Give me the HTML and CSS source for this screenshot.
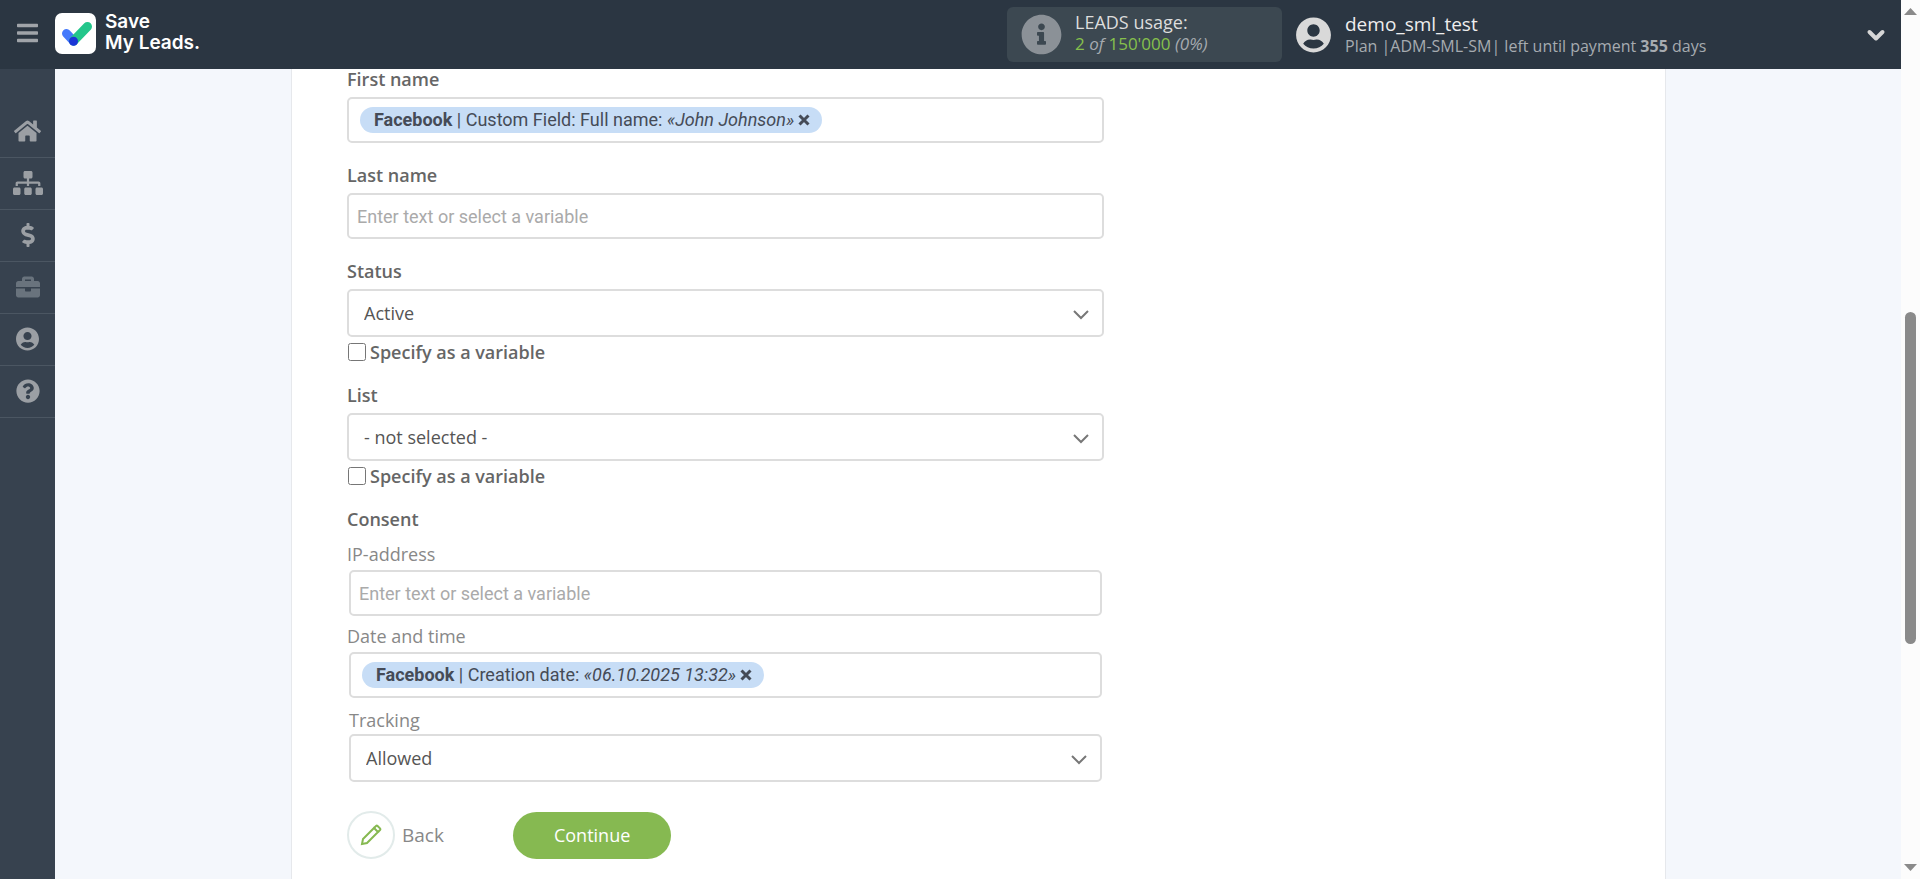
FILE: index.html
```html
<!DOCTYPE html>
<html lang="en">
<head>
<meta charset="utf-8">
<title>Save My Leads</title>
<link rel="stylesheet" href="styles.css">
</head>
<body>
<div class="app">
  <header class="topbar">
    <button class="menu-btn" type="button" aria-label="Menu">
      <svg width="21" height="24" viewBox="0 0 448 512"><path d="M16 132h416c9 0 16-7 16-16V76c0-9-7-16-16-16H16C7 60 0 67 0 76v40c0 9 7 16 16 16zm0 160h416c9 0 16-7 16-16v-40c0-9-7-16-16-16H16c-9 0-16 7-16 16v40c0 9 7 16 16 16zm0 160h416c9 0 16-7 16-16v-40c0-9-7-16-16-16H16c-9 0-16 7-16 16v40c0 9 7 16 16 16z"/></svg>
    </button>
    <a class="brand" href="#">
      <svg width="41" height="41" viewBox="0 0 41 41" fill="none" stroke-width="9" stroke-linecap="round">
        <rect width="41" height="41" rx="7" fill="#fff"/>
        <path d="M11.5 20.5l7 7.5" stroke="#4479fb"/>
        <path d="M18.5 28l14-14.500" stroke="#23c68b"/>
        <circle cx="18.500" cy="28.300" r="4.500" fill="#1b35d6"/>
      </svg>
      <span class="brand-name">Save<br>My Leads.</span>
    </a>
    <div class="usage">
      <svg class="usage-icon" width="41" height="41" viewBox="0 0 512 512"><path d="M256 8C119.043 8 8 119.083 8 256c0 136.997 111.043 248 248 248s248-111.003 248-248C504 119.083 392.957 8 256 8zm0 110c23.196 0 42 18.804 42 42s-18.804 42-42 42-42-18.804-42-42 18.804-42 42-42zm56 254c0 6.627-5.373 12-12 12h-88c-6.627 0-12-5.373-12-12v-24c0-6.627 5.373-12 12-12h12v-64h-12c-6.627 0-12-5.373-12-12v-24c0-6.627 5.373-12 12-12h64c6.627 0 12 5.373 12 12v100h12c6.627 0 12 5.373 12 12v24z"/></svg>
      <div class="usage-text">
        <div class="usage-title">LEADS usage:</div>
        <div class="usage-count"><b>2</b> <i>of</i> <b>150'000</b> <i>(0%)</i></div>
      </div>
    </div>
    <div class="user">
      <svg class="user-icon" width="35" height="36" viewBox="0 0 496 512"><path d="M248 8C111 8 0 119 0 256s111 248 248 248 248-111 248-248S385 8 248 8zm0 96c48.6 0 88 39.4 88 88s-39.4 88-88 88-88-39.4-88-88 39.4-88 88-88zm0 344c-58.7 0-111.3-26.6-146.5-68.2 18.8-35.4 55.6-59.8 98.5-59.8 2.4 0 4.8.4 7.1 1.1 13 4.2 26.6 6.9 40.9 6.9 14.3 0 28-2.7 40.9-6.9 2.3-.7 4.7-1.1 7.1-1.1 42.9 0 79.7 24.4 98.5 59.8C359.3 421.4 306.7 448 248 448z"/></svg>
      <div class="user-text">
        <div class="user-name">demo_sml_test</div>
        <div class="user-plan">Plan |ADM-SML-SM| left until payment <b>355</b> days</div>
      </div>
      <button class="user-toggle" type="button" aria-label="Account menu">
        <svg width="20" height="14" viewBox="0 0 20 14" fill="none" stroke="#d6d6d6" stroke-width="4" stroke-linecap="round" stroke-linejoin="round"><path d="M3.500 4L10 10.500 16.500 4"/></svg>
      </button>
    </div>
  </header>

  <nav class="sidebar" aria-label="Main">
    <a class="nav-item" href="#" aria-label="Home"><svg width="27" height="24" viewBox="0 0 576 512"><path d="M280.37 148.26L96 300.11V464a16 16 0 0 0 16 16l112.06-.29a16 16 0 0 0 15.92-16V368a16 16 0 0 1 16-16h64a16 16 0 0 1 16 16v95.64a16 16 0 0 0 16 16.05L464 480a16 16 0 0 0 16-16V300L295.67 148.26a12.19 12.19 0 0 0-15.3 0zM571.6 251.47L488 182.56V44.05a12 12 0 0 0-12-12h-56a12 12 0 0 0-12 12v72.61L318.47 43a48 48 0 0 0-61 0L4.34 251.47a12 12 0 0 0-1.6 16.9l25.5 31A12 12 0 0 0 45.15 301l235.22-193.74a12.19 12.19 0 0 1 15.3 0L530.9 301a12 12 0 0 0 16.9-1.6l25.5-31a12 12 0 0 0-1.7-16.93z"/></svg></a>
    <a class="nav-item" href="#" aria-label="Connections"><svg width="30" height="24" viewBox="0 0 640 512"><path d="M128 352H32c-17.67 0-32 14.33-32 32v96c0 17.67 14.33 32 32 32h96c17.67 0 32-14.33 32-32v-96c0-17.67-14.33-32-32-32zm-24-80h192v48h48v-48h192v48h48v-57.59c0-21.17-17.23-38.41-38.41-38.41H344v-64h40c17.67 0 32-14.33 32-32V32c0-17.67-14.33-32-32-32H256c-17.67 0-32 14.33-32 32v96c0 17.67 14.33 32 32 32h40v64H94.41C73.23 224 56 241.23 56 262.41V320h48v-48zm264 80h-96c-17.67 0-32 14.33-32 32v96c0 17.67 14.33 32 32 32h96c17.67 0 32-14.33 32-32v-96c0-17.67-14.33-32-32-32zm240 0h-96c-17.67 0-32 14.33-32 32v96c0 17.67 14.33 32 32 32h96c17.67 0 32-14.33 32-32v-96c0-17.67-14.33-32-32-32z"/></svg></a>
    <a class="nav-item" href="#" aria-label="Billing"><svg width="14" height="24" viewBox="0 0 288 512"><path d="M209.2 233.4l-108-31.6C88.7 198.2 80 186.5 80 173.5c0-16.3 13.2-29.5 29.5-29.5h66.3c12.2 0 24.2 3.7 34.2 10.5 6.1 4.1 14.3 3.1 19.5-2l34.8-34c7.1-6.9 6.1-18.4-1.8-24.500C238 74.8 207.4 64.1 176 64V16c0-8.8-7.2-16-16-16h-32c-8.8 0-16 7.2-16 16v48h-2.5C45.8 64-5.4 118.7.5 183.6c4.2 46.1 39.4 83.6 83.8 96.6l102.500 30c12.5 3.7 21.2 15.3 21.2 28.3 0 16.3-13.2 29.5-29.5 29.5h-66.3C100 368 88 364.3 78 357.5c-6.1-4.1-14.3-3.1-19.5 2l-34.8 34c-7.1 6.9-6.1 18.4 1.8 24.5 24.5 19.2 55.1 29.9 86.5 30v48c0 8.8 7.2 16 16 16h32c8.8 0 16-7.2 16-16v-48.2c46.6-.9 90.3-28.6 105.7-72.7 21.5-61.6-14.6-124.8-72.5-141.700z"/></svg></a>
    <a class="nav-item nav-item-dim" href="#" aria-label="Projects"><svg width="24" height="24" viewBox="0 0 512 512"><path d="M320 336c0 8.84-7.16 16-16 16h-96c-8.84 0-16-7.16-16-16v-48H0v144c0 25.6 22.4 48 48 48h416c25.6 0 48-22.4 48-48V288H320v48zm144-208h-80V80c0-25.6-22.4-48-48-48H176c-25.6 0-48 22.4-48 48v48H48c-25.6 0-48 22.4-48 48v80h512v-80c0-25.6-22.4-48-48-48zm-144 0H192V96h128v32z"/></svg></a>
    <a class="nav-item" href="#" aria-label="Profile"><svg width="23" height="24" viewBox="0 0 496 512"><path d="M248 8C111 8 0 119 0 256s111 248 248 248 248-111 248-248S385 8 248 8zm0 96c48.6 0 88 39.4 88 88s-39.4 88-88 88-88-39.4-88-88 39.4-88 88-88zm0 344c-58.7 0-111.3-26.6-146.5-68.2 18.8-35.4 55.6-59.8 98.5-59.8 2.4 0 4.8.4 7.1 1.1 13 4.2 26.6 6.9 40.9 6.9 14.3 0 28-2.7 40.9-6.9 2.3-.7 4.7-1.1 7.1-1.1 42.9 0 79.7 24.4 98.5 59.8C359.3 421.4 306.7 448 248 448z"/></svg></a>
    <a class="nav-item" href="#" aria-label="Help"><svg width="24" height="24" viewBox="0 0 512 512"><path d="M504 256c0 136.997-111.043 248-248 248S8 392.997 8 256C8 119.083 119.043 8 256 8s248 111.083 248 248zM262.655 90c-54.497 0-89.255 22.957-116.549 63.758-3.536 5.286-2.353 12.415 2.715 16.258l34.699 26.31c5.205 3.947 12.621 3.008 16.665-2.122 17.864-22.658 30.113-35.797 57.303-35.797 20.429 0 45.698 13.148 45.698 32.958 0 14.976-12.363 22.667-32.534 33.976C247.128 238.528 216 254.941 216 296v4c0 6.627 5.373 12 12 12h56c6.627 0 12-5.373 12-12v-1.333c0-28.462 83.186-29.647 83.186-106.667 0-58.002-60.165-102-116.531-102zM256 338c-25.365 0-46 20.635-46 46 0 25.364 20.635 46 46 46s46-20.636 46-46c0-25.365-20.635-46-46-46z"/></svg></a>
  </nav>

  <main class="content">
    <form class="panel">
      <div class="form">
        <div class="field">
          <label class="label" for="first-name">First name</label>
          <div class="box box-tags">
            <span class="tag"><b>Facebook</b> | Custom Field: Full name: <i>«John Johnson»</i><button class="tag-x" type="button" aria-label="Remove"><svg width="12" height="12" viewBox="0 0 12 12" fill="none" stroke="#454b57" stroke-width="3"><path d="M1.500 1.500l9 9M10.500 1.500l-9 9"/></svg></button></span>
            <input class="tag-input" id="first-name" type="text">
          </div>
        </div>
        <div class="field">
          <label class="label" for="last-name">Last name</label>
          <input class="box box-text" id="last-name" type="text" placeholder="Enter text or select a variable">
        </div>
        <div class="field">
          <label class="label" for="status">Status</label>
          <div class="select">
            <select class="box box-select" id="status"><option>Active</option></select>
            <svg class="select-arrow" width="16" height="10" viewBox="0 0 16 10"><path d="M1 1l7 7 7-7"/></svg>
          </div>
          <label class="check"><input type="checkbox">Specify as a variable</label>
        </div>
        <div class="field">
          <label class="label" for="list">List</label>
          <div class="select">
            <select class="box box-select" id="list"><option>- not selected -</option></select>
            <svg class="select-arrow" width="16" height="10" viewBox="0 0 16 10"><path d="M1 1l7 7 7-7"/></svg>
          </div>
          <label class="check"><input type="checkbox">Specify as a variable</label>
        </div>
        <fieldset class="group">
          <legend class="label">Consent</legend>
          <label class="sublabel" for="ip">IP-address</label>
          <div class="inset"><input class="box box-text" id="ip" type="text" placeholder="Enter text or select a variable"></div>
          <label class="sublabel" for="date">Date and time</label>
          <div class="inset">
            <div class="box box-tags">
              <span class="tag"><b>Facebook</b> | Creation date: <i>«06.10.2025 13:32»</i><button class="tag-x" type="button" aria-label="Remove"><svg width="12" height="12" viewBox="0 0 12 12" fill="none" stroke="#454b57" stroke-width="3"><path d="M1.500 1.500l9 9M10.500 1.500l-9 9"/></svg></button></span>
              <input class="tag-input" id="date" type="text">
            </div>
          </div>
          <div class="inset tracking">
            <label class="sublabel" for="tracking">Tracking</label>
            <div class="select">
              <select class="box box-select" id="tracking"><option>Allowed</option></select>
              <svg class="select-arrow" width="16" height="10" viewBox="0 0 16 10"><path d="M1 1l7 7 7-7"/></svg>
            </div>
          </div>
        </fieldset>
        <div class="actions">
          <button class="back" type="button">
            <span class="back-icon"><svg width="22" height="22" viewBox="0 0 22 22" fill="none" stroke="#86b951" stroke-width="2"><path d="M2 20l1-5L14 4l4 4L7 19z"/><path d="M14 4l2-2q.8-.7 1.600 0l2.400 2.400q.7.800 0 1.600l-2 2"/></svg></span>
            Back
          </button>
          <button class="continue" type="submit">Continue</button>
        </div>
      </div>
    </form>
  </main>

  <div class="scroll" aria-hidden="true">
    <svg width="13" height="7" viewBox="0 0 13 7"><path d="M0 7L6.500 0 13 7z"/></svg>
    <div class="scroll-track"><div class="scroll-thumb"></div></div>
    <svg width="13" height="7" viewBox="0 0 13 7"><path d="M0 0L6.500 7 13 0z"/></svg>
  </div>
</div>
</body>
</html>
```

FILE: styles.css
```css
* {
  box-sizing: border-box;
}

body {
  margin: 0;
  font: 18px/20px "Open Sans", "Noto Sans", sans-serif;
  color: #666;
  background: #f4f7fc;
}

svg {
  display: block;
  flex: none;
}

button {
  font: inherit;
  color: inherit;
  padding: 0;
  border: 0;
  background: none;
  cursor: pointer;
}

.app {
  display: grid;
  grid-template-columns: 55px 1fr 19px;
  grid-template-rows: auto 1fr;
  grid-template-areas:
    "top top scroll"
    "side main scroll";
  min-height: 100vh;
}

/* Top bar */
.topbar {
  grid-area: top;
  display: flex;
  align-items: center;
  padding: 7px 15px 7px 17px;
  background: #2b3642;
}

.menu-btn {
  margin-right: 17px;
  padding-bottom: 3px;
  fill: #a0a4a9;
}

.brand {
  display: flex;
  align-items: center;
  gap: 9px;
  margin-right: auto;
  padding-bottom: 3px;
  color: #fff;
  text-decoration: none;
}

.brand-name {
  padding-bottom: 2px;
  font: 600 19px/21px Inter, sans-serif;
}

.usage {
  display: flex;
  align-items: center;
  gap: 13px;
  width: 275px;
  height: 55px;
  padding: 0 14px;
  border-radius: 6px;
  background: #3c4851;
}

.usage-icon {
  fill: #8b9197;
}

.usage-text {
  padding-bottom: 3px;
}

.usage-title {
  line-height: 22px;
  color: #ddd;
}

.usage-count {
  font-size: 17px;
  line-height: 22px;
  color: #a6abb0;
}

.usage-count b {
  font-weight: 400;
  color: #86c04c;
}

.user {
  display: flex;
  align-items: center;
  gap: 14px;
  width: 604px;
  padding-left: 14px;
}

.user-icon {
  fill: #d9d9d9;
}

.user-name {
  font-size: 19px;
  line-height: 22px;
  color: #eee;
}

.user-plan {
  font-size: 16px;
  line-height: 22px;
  color: #a6abb0;
}

.user-toggle {
  margin-left: auto;
}

/* Sidebar */
.sidebar {
  grid-area: side;
  padding-top: 37px;
  background: #37424f;
}

.nav-item {
  display: flex;
  align-items: center;
  justify-content: center;
  height: 52px;
  padding-bottom: 1px;
  border-bottom: 1px solid #4b5662;
  fill: #9b9fa4;
}

.nav-item-dim {
  fill: #69737d;
}

/* Form panel */
.content {
  grid-area: main;
  padding: 0 235px 0 236px;
}

.panel {
  height: 100%;
  padding: 0 56px 20px 55px;
  border: solid #e6e8ec;
  border-width: 0 1px;
  background: #fff;
}

.form {
  width: 60%;
}

.field {
  display: flex;
  flex-direction: column;
  margin-bottom: 22px;
}

.label {
  margin-bottom: 8px;
  padding: 0;
  font-weight: 600;
}

.sublabel {
  display: block;
  margin-bottom: 6px;
  color: #888;
}

.box {
  display: block;
  width: 100%;
  height: 46px;
  border: 2px solid #ddd;
  border-radius: 5px;
  background: #fff;
  outline: 0;
}

.box-text {
  padding: 0 8px;
  font: 18px/20px Roboto, sans-serif;
}

.box-text::placeholder {
  color: #aaa;
}

.box-tags {
  display: flex;
  align-items: center;
  padding: 0 11px;
}

.tag {
  display: flex;
  align-items: center;
  flex: none;
  height: 26px;
  padding: 0 12px 0 14px;
  border-radius: 13px;
  font: 18px/26px Roboto, sans-serif;
  color: #454b57;
  background: #c7ddf6;
  white-space: pre;
}

.tag-x {
  margin-left: 4px;
}

.tag-input {
  flex: 1;
  min-width: 0;
  border: 0;
  outline: 0;
}

.select {
  display: grid;
  align-items: center;
}

.select > * {
  grid-area: 1 / 1;
}

.box-select {
  height: 48px;
  padding: 0 15px;
  font: inherit;
  color: #555;
  appearance: none;
}

.select-arrow {
  justify-self: end;
  margin: 3px 15px 0 0;
  fill: none;
  stroke: #777;
  stroke-width: 2;
  pointer-events: none;
}

.check {
  display: flex;
  align-items: center;
  gap: 4px;
  margin-top: 5px;
  padding-bottom: 1px;
  font-weight: 600;
}

.check input {
  width: 18px;
  height: 18px;
  margin: 0 0 0 1px;
}

.group {
  margin: 0;
  padding: 0;
  border: 0;
}

.group .label {
  margin-bottom: 15px;
}

.inset {
  margin-bottom: 10px;
  padding: 0 2px;
}

.tracking {
  margin: 12px 0 29px;
}

.tracking .sublabel {
  margin-bottom: 4px;
}

.actions {
  display: flex;
  align-items: center;
  gap: 69px;
}

.back {
  display: flex;
  align-items: center;
  gap: 7px;
  font-size: 19px;
  color: #888;
}

.back-icon {
  display: grid;
  place-items: center;
  width: 48px;
  height: 48px;
  border: 2px solid #e2ebea;
  border-radius: 50%;
}

.continue {
  height: 47px;
  padding: 0 41px;
  border-radius: 24px;
  font-size: 18px;
  color: #fff;
  background: #86b951;
}

/* Page scrollbar */
.scroll {
  grid-area: scroll;
  display: flex;
  flex-direction: column;
  align-items: center;
  padding: 8px 0;
  fill: #8a8a8a;
  background: #fcfcfc;
}

.scroll-track {
  flex: 1;
  display: grid;
  grid-template-rows: 297fr 332fr 220fr;
}

.scroll-thumb {
  grid-row: 2;
  width: 11px;
  border-radius: 6px;
  background: #8a8a8a;
}
```
